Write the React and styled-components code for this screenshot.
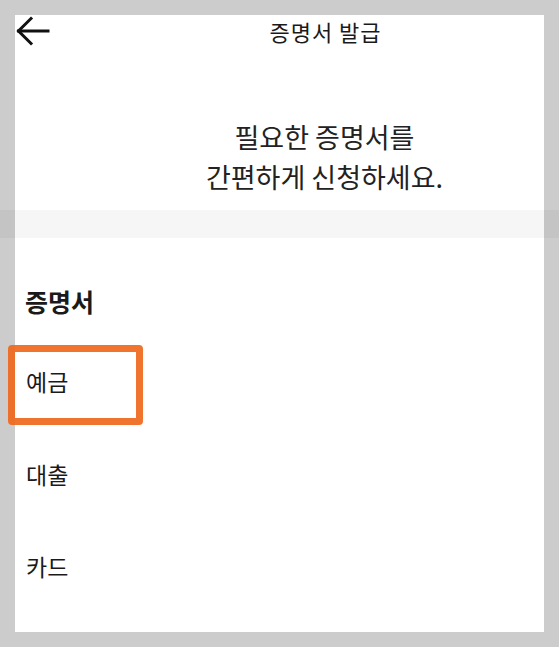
import React from 'react'
import styled, { createGlobalStyle } from 'styled-components'

const GlobalStyle = createGlobalStyle`
  html, body {
    margin: 0;
    padding: 0;
    background: #cccccc;
  }
  body {
    font-family: "Noto Sans CJK KR", "Noto Sans", sans-serif;
    color: #1a1a1a;
  }
`

const Page = styled.div`
  padding: 15px;
  min-height: 100vh;
  box-sizing: border-box;
  background: #cccccc;
`

const Panel = styled.div`
  width: 529px;
  height: 617px;
  background: #ffffff;
  display: flex;
  flex-direction: column;
`

const Header = styled.header`
  flex-shrink: 0;
  display: flex;
  align-items: center;
  height: 32px;
`

const BackButton = styled.button`
  display: flex;
  align-items: center;
  justify-content: center;
  width: 36px;
  height: 32px;
  padding: 0;
  border: 0;
  background: none;
  color: #111;
`

const Title = styled.h1`
  flex: 1;
  margin: 0;
  padding-left: 56px;
  text-align: center;
  font-size: 22px;
  font-weight: 400;
  letter-spacing: 1px;
  line-height: 32px;
`

const Intro = styled.p`
  flex-shrink: 0;
  margin: 0;
  padding: 70px 0 0 90px;
  height: 163px;
  box-sizing: border-box;
  text-align: center;
  font-size: 27px;
  line-height: 40px;
  color: #222;
`

const Band = styled.div`
  flex-shrink: 0;
  margin: 0 -15px;
  height: 28px;
  background: rgba(0, 0, 0, 0.035);
`

const Section = styled.section`
  flex: 1;
  min-height: 0;
  padding: 47px 0 0 10px;
`

const SectionTitle = styled.h2`
  margin: 0;
  font-size: 25px;
  font-weight: 700;
  line-height: 32px;
`

const List = styled.ul`
  list-style: none;
  margin: 49px 0 0;
  padding: 0;
`

const Item = styled.li`
  position: relative;
  height: 92.5px;
  padding-left: 1px;
  font-size: 23px;
  line-height: 30px;
`

const Highlight = styled.span`
  position: absolute;
  left: -17px;
  top: -21px;
  width: 135px;
  height: 80px;
  box-sizing: border-box;
  border: 7px solid rgba(240, 104, 28, 0.92);
  border-radius: 4px;
  pointer-events: none;
`

const ArrowIcon = () => (
  <svg width="34" height="30" viewBox="0 0 34 30" fill="none" stroke="currentColor" strokeWidth="3" strokeLinecap="square">
    <path d="M2.5 15H32" />
    <path d="M15 2.5L2.5 15L15 27.5" />
  </svg>
)

const items = [
  { label: '예금', highlighted: true },
  { label: '대출' },
  { label: '카드' }
]

const App = () => {
  return (
    <Page>
      <GlobalStyle />
      <Panel>
        <Header>
          <BackButton aria-label="뒤로">
            <ArrowIcon />
          </BackButton>
          <Title>증명서 발급</Title>
        </Header>
        <Intro>
          필요한 증명서를
          <br />
          간편하게 신청하세요.
        </Intro>
        <Band />
        <Section>
          <SectionTitle>증명서</SectionTitle>
          <List>
            {items.map(item => (
              <Item key={item.label}>
                {item.highlighted && <Highlight />}
                {item.label}
              </Item>
            ))}
          </List>
        </Section>
      </Panel>
    </Page>
  )
}

export default App
